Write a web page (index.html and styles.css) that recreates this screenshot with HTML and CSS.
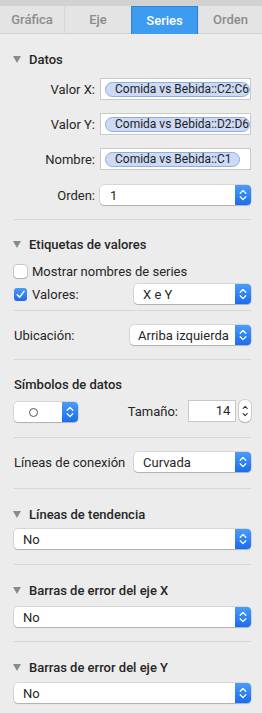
FILE: index.html
```html
<!DOCTYPE html>
<html lang="es">
<head>
  <meta charset="UTF-8" />
  <meta name="viewport" content="width=device-width, initial-scale=1.0" />
  <title>Series</title>
  <link rel="stylesheet" href="styles.css">
</head>
<body>
  <div class="topstrip"></div>
  <nav class="tabs">
    <div class="tab">Gráfica</div>
    <div class="tab">Eje</div>
    <div class="tab active">Series</div>
    <div class="tab">Orden</div>
  </nav>

  <main class="panel">
    <section class="sec sec-datos">
      <h2 class="head"><span class="tri"></span>Datos</h2>
      <div class="frow first">
        <label>Valor X:</label>
        <div class="field"><span class="token">Comida vs Bebida::C2:C6</span></div>
      </div>
      <div class="frow">
        <label>Valor Y:</label>
        <div class="field"><span class="token">Comida vs Bebida::D2:D6</span></div>
      </div>
      <div class="frow">
        <label>Nombre:</label>
        <div class="field"><span class="token short">Comida vs Bebida::C1</span></div>
      </div>
      <div class="frow orden">
        <label>Orden:</label>
        <div class="popup"><span class="val">1</span><span class="step"></span></div>
      </div>
    </section>

    <section class="sec sec-etiq">
      <h2 class="head"><span class="tri"></span>Etiquetas de valores</h2>
      <div class="check-row">
        <span class="box"></span>Mostrar nombres de series
      </div>
      <div class="check-row valores">
        <span class="box on">
          <svg viewBox="0 0 14 14" width="14" height="14"><path d="M3.5 7.3 L6 10 L10.8 3.6" fill="none" stroke="#fff" stroke-width="1.6" stroke-linecap="round" stroke-linejoin="round"/></svg>
        </span>Valores:
        <div class="popup w117"><span class="val">X e Y</span><span class="step"></span></div>
      </div>
    </section>

    <section class="sec sec-ubic">
      <div class="line-row">
        <span>Ubicación:</span>
        <div class="popup w121"><span class="val tight">Arriba izquierda</span><span class="step"></span></div>
      </div>
    </section>

    <section class="sec sec-simb">
      <h2 class="head plain">Símbolos de datos</h2>
      <div class="simb-row">
        <div class="popup w66"><span class="val"><span class="circ"></span></span><span class="step"></span></div>
        <span class="tam">Tamaño:</span>
        <div class="numfield">14</div>
        <span class="mini-step"></span>
      </div>
    </section>

    <section class="sec sec-con">
      <div class="line-row">
        <span>Líneas de conexión</span>
        <div class="popup w117"><span class="val">Curvada</span><span class="step"></span></div>
      </div>
    </section>

    <section class="sec sec-tend">
      <h2 class="head"><span class="tri"></span>Líneas de tendencia</h2>
      <div class="popup full"><span class="val">No</span><span class="step"></span></div>
    </section>

    <section class="sec sec-barx">
      <h2 class="head"><span class="tri"></span>Barras de error del eje X</h2>
      <div class="popup full"><span class="val">No</span><span class="step"></span></div>
    </section>

    <section class="sec sec-bary">
      <h2 class="head"><span class="tri"></span>Barras de error del eje Y</h2>
      <div class="popup full"><span class="val">No</span><span class="step"></span></div>
    </section>
  </main>
</body>
</html>
```

FILE: styles.css
```css
* {
  margin: 0;
  padding: 0;
  box-sizing: border-box;
}
body {
  width: 262px;
  height: 713px;
  overflow: hidden;
  background: #ececec;
  font-family: Roboto, "Liberation Sans", sans-serif;
  font-size: 13px;
  color: #262626;
}
.topstrip {
  height: 6px;
  background: #d2d2d2;
}
.tabs {
  display: grid;
  grid-template-columns: 64px 67px 67px 64px;
  height: 28px;
  background: #e4e4e4;
  border-bottom: 1px solid #cfcfcf;
}
.tab {
  display: flex;
  align-items: center;
  justify-content: center;
  color: #8c8c8c;
  font-weight: 500;
  font-size: 13px;
  border-left: 1px solid #d6d6d6;
}
.tab:first-child {
  border-left: none;
}
.tab.active {
  background: #3d9bf0;
  color: #fff;
  border: 1px solid #2f82d6;
  border-bottom: none;
  margin-bottom: -1px;
}
.panel {
  padding: 0 11px 0 14px;
}
.sec {
  border-bottom: 1px solid #d6d6d6;
}
.sec:last-child {
  border-bottom: none;
}
.head {
  display: flex;
  align-items: center;
  height: 18px;
  font-size: 13px;
  font-weight: 500;
  color: #262626;
}
.tri {
  width: 0;
  height: 0;
  margin: 0 8px 0 -1px;
  border-left: 4px solid transparent;
  border-right: 4px solid transparent;
  border-top: 7px solid #8a8a8a;
}

/* Datos */
.sec-datos {
  padding: 16px 0 14px;
}
.frow {
  display: grid;
  grid-template-columns: 81px 1fr;
  column-gap: 5px;
  align-items: center;
  margin-top: 13px;
}
.frow.first {
  margin-top: 10px;
}
.frow.orden {
  margin-top: 15px;
}
.frow label {
  text-align: right;
}
.field {
  height: 22px;
  background: #fff;
  border: 1px solid #cacaca;
  display: flex;
  align-items: center;
  padding-left: 4px;
  overflow: hidden;
}
.token {
  display: inline-block;
  height: 15px;
  line-height: 13px;
  padding: 0 0 0 9px;
  width: 145px;
  font-size: 12px;
  color: #1e1e1e;
  background: #ccdaf5;
  border: 1px solid #8eaee2;
  border-radius: 8px;
  white-space: nowrap;
  overflow: hidden;
}
.token.short {
  width: 135px;
}

/* popup buttons */
.popup {
  display: flex;
  align-items: center;
  height: 20px;
  background: #fff;
  border-radius: 4px;
  box-shadow: 0 0 0 0.5px rgba(0, 0, 0, 0.18), 0 1px 1px rgba(0, 0, 0, 0.18);
  overflow: hidden;
}
.popup .val {
  flex: 1;
  padding-left: 9px;
  white-space: nowrap;
}
.popup .val.tight {
  padding-left: 8px;
}
.frow .popup .val {
  padding-left: 10px;
}
.step {
  width: 16px;
  height: 100%;
  background-image:
    url("data:image/svg+xml,%3Csvg xmlns='http://www.w3.org/2000/svg' width='16' height='20' viewBox='0 0 16 20'%3E%3Cpath d='M5.2 8.2 L8 5.4 L10.8 8.2 M5.2 11.8 L8 14.6 L10.8 11.8' fill='none' stroke='%23fff' stroke-width='1.3' stroke-linecap='round' stroke-linejoin='round'/%3E%3C/svg%3E"),
    linear-gradient(#4a9cf9, #1a6cf0);
}
.w117 {
  width: 117px;
}
.w121 {
  width: 121px;
}
.w66 {
  width: 66px;
}
.full {
  width: 100%;
}

/* Etiquetas */
.sec-etiq {
  padding: 15px 0 6px;
}
.check-row {
  display: flex;
  align-items: center;
  height: 18px;
  margin-top: 9px;
}
.check-row.valores {
  height: 20px;
  margin-top: 4px;
}
.check-row.valores .popup {
  margin-left: auto;
}
.box {
  width: 13px;
  height: 13px;
  margin-right: 5px;
  border-radius: 3px;
  background: #fff;
  box-shadow: 0 0 0 0.5px rgba(0, 0, 0, 0.3), 0 1px 1px rgba(0, 0, 0, 0.12);
  display: flex;
  align-items: center;
  justify-content: center;
}
.box.on {
  background: linear-gradient(#4a9cf9, #1a6cf0);
  box-shadow: none;
}
.box svg {
  width: 13px;
  height: 13px;
}

/* single line rows */
.line-row {
  display: flex;
  align-items: center;
  justify-content: space-between;
}
.sec-ubic {
  padding: 14px 0 14px;
}
.sec-con {
  padding: 14px 0 16px;
}

/* Símbolos */
.sec-simb {
  padding: 15px 0 15px;
}
.simb-row {
  display: flex;
  align-items: center;
  height: 22px;
  margin-top: 7px;
}
.simb-row .popup {
  margin-top: 1px;
}
.circ {
  display: inline-block;
  width: 9px;
  height: 9px;
  margin-left: 6px;
  margin-top: 5px;
  border: 1.2px solid #555;
  border-radius: 50%;
}
.tam {
  margin-left: 50px;
}
.numfield {
  width: 50px;
  height: 22px;
  margin-left: 10px;
  background: #fff;
  border: 1px solid #c8c8c8;
  text-align: right;
  padding-right: 5px;
  line-height: 20px;
}
.mini-step {
  width: 12px;
  height: 22px;
  margin-left: 3px;
  border-radius: 5px;
  background-color: #fff;
  box-shadow: 0 0 0 0.5px rgba(0, 0, 0, 0.25), 0 1px 1px rgba(0, 0, 0, 0.12);
  background-image: url("data:image/svg+xml,%3Csvg xmlns='http://www.w3.org/2000/svg' width='12' height='22' viewBox='0 0 12 22'%3E%3Cpath d='M4 8.5 L6 6.3 L8 8.5 M4 13.5 L6 15.7 L8 13.5' fill='none' stroke='%23333' stroke-width='1.1' stroke-linecap='round' stroke-linejoin='round'/%3E%3C/svg%3E");
}

/* Collapsible selects */
.sec-tend {
  padding: 16px 0 15px;
}
.sec-tend .popup {
  margin-top: 6px;
}
.sec-barx {
  padding: 16px 0 14px;
}
.sec-barx .popup {
  margin-top: 8px;
}
.sec-bary {
  padding-top: 16px;
}
.sec-bary .popup {
  margin-top: 7px;
}
```
